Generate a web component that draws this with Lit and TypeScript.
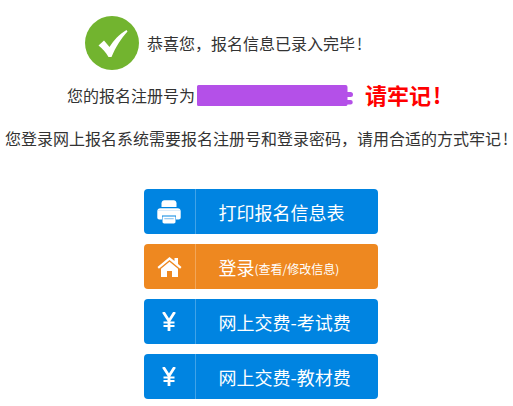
import { LitElement, html, css } from "lit";
import { customElement } from "lit/decorators.js";

const printer = html`<svg width="24" height="24" viewBox="0 0 24 24"><path fill="#fff" d="M4.500 7V3.200C4.500 1.400 5.800.3 7.400.3h9.200c1.600 0 2.900 1.100 2.900 2.900V7z"/><path fill="#fff" d="M3.300 8.200h17.400c1.800 0 3 1.200 3 3v6.300c0 1.300-.8 2-2 2H19v-4H5v4H2.300c-1.200 0-2-.7-2-2v-6.300c0-1.800 1.200-3 3-3z"/><path fill="#fff" d="M5.500 16.500h13v5.300c0 1-.7 1.700-1.700 1.700H7.200c-1 0-1.700-.7-1.700-1.700z"/><path fill="#9ccdf2" d="M7.300 18h9.400v1.300H7.300z"/><path fill="#9ccdf2" d="M.8 10.400h22.400v.6H.8z" opacity=".6"/></svg>`;
const home = html`<svg width="25" height="20" viewBox="0 0 25 20"><path fill="#fff" d="M12.500 0 .5 10l1.400 1.700L12.500 3l10.600 8.700 1.400-1.700-3.500-3V1h-3.500v3z"/><path fill="#fff" d="M12.500 4.800 4 11.800V20h6v-6h5v6h6v-8.200z"/></svg>`;
const yen = html`<svg width="14" height="19" viewBox="0 0 14 19"><path fill="none" stroke="#fff" stroke-width="2.800" d="M1.300 0 7 9l5.700-9M7 8.500V19"/><path fill="none" stroke="#fff" stroke-width="2" d="M1.500 10.500h11M1.500 14h11"/></svg>`;

@customElement("app-root")
export class AppRoot extends LitElement {
  static styles = css`
    :host {
      display: block;
      width: 513px;
      height: 406px;
      overflow: hidden;
      background: #fff;
      color: #333;
      font-family: "Noto Sans CJK SC", "Liberation Sans", sans-serif;
      font-size: 16px;
    }
    .page {
      display: flex;
      flex-direction: column;
      align-items: center;
      padding-top: 16px;
    }
    .success {
      display: flex;
      align-items: center;
      gap: 8px;
      height: 54px;
      margin-left: -66px;
    }
    .check {
      width: 54px;
      height: 54px;
      display: block;
    }
    .msg { line-height: 24px; }
    .bang { margin-left: 2px; }
    .reg {
      display: flex;
      align-items: center;
      height: 24px;
      margin-top: 13px;
      margin-left: -5px;
    }
    .mask {
      display: block;
      margin: 0 12px 0 2px;
    }
    .remember {
      color: #f00;
      font-size: 22px;
      font-weight: 700;
      line-height: 22px;
      margin-bottom: 3px;
    }
    .note {
      margin-top: 19px;
      line-height: 24px;
      white-space: nowrap;
    }
    .buttons {
      display: flex;
      flex-direction: column;
      gap: 10px;
      margin-top: 39px;
      margin-left: 8px;
      width: 234px;
    }
    .btn {
      display: flex;
      align-items: stretch;
      height: 45px;
      border-radius: 4px;
      background: #0084e1;
      color: #fff;
      font-size: 18px;
    }
    .btn.orange { background: #ee8820; }
    .icon {
      width: 51px;
      flex: none;
      display: flex;
      align-items: center;
      justify-content: center;
      border-right: 1px solid rgba(255, 255, 255, 0.25);
    }
    .icon svg { display: block; }
    .label {
      display: flex;
      align-items: center;
      padding-left: 23px;
      white-space: nowrap;
    }
    .label small { font-size: 12px; padding-top: 4px; }
  `;

  render() {
    return html`<div class="page">
      <div class="success">
        <svg class="check" viewBox="0 0 54 54">
          <circle cx="27" cy="27" r="27" fill="#72b42f"/>
          <path fill="#fff" d="M13.500 29.500 19 24.500 24.500 31C29 24 34 18.500 41.500 14L42.500 15.500C36 22.500 31 30.500 26.500 41H23.500C21 36.500 17.500 32.500 13.500 29.500z"/>
        </svg>
        <span class="msg">恭喜您，报名信息已录入完毕<span class="bang">!</span></span>
      </div>
      <div class="reg">
        <span>您的报名注册号为</span>
        <svg class="mask" width="156" height="21" viewBox="0 0 156 21">
          <path fill="#b450e8" d="M1.500 0h147a2 2 0 0 1 2 2v5h3a2 2 0 0 1 0 5h-3v3h3a2 2 0 0 1 0 4.500h-3a2 1.500 0 0 1-2 1.500H1.500A1.500 1.500 0 0 1 0 19.500V1.500A1.500 1.500 0 0 1 1.500 0z"/>
        </svg>
        <span class="remember">请牢记<span class="bang">!</span></span>
      </div>
      <div class="note">您登录网上报名系统需要报名注册号和登录密码，请用合适的方式牢记<span class="bang">!</span></div>
      <div class="buttons">
        <div class="btn"><div class="icon">${printer}</div><div class="label">打印报名信息表</div></div>
        <div class="btn orange"><div class="icon">${home}</div><div class="label">登录<small>(查看/修改信息)</small></div></div>
        <div class="btn"><div class="icon">${yen}</div><div class="label">网上交费-考试费</div></div>
        <div class="btn"><div class="icon">${yen}</div><div class="label">网上交费-教材费</div></div>
      </div>
    </div>`;
  }
}
